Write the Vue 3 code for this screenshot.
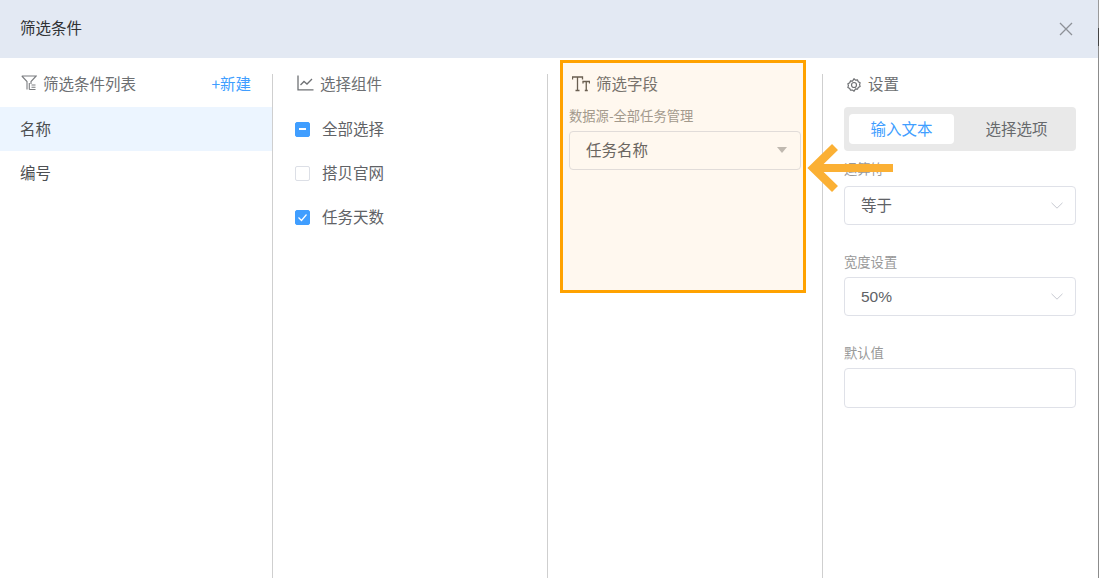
<script setup>
const components = [
  { label: '全部选择', state: 'mixed' },
  { label: '搭贝官网', state: 'off' },
  { label: '任务天数', state: 'on' }
]
</script>

<template>
  <div class="dialog">
    <header class="top">
      <span class="title">筛选条件</span>
      <svg class="close" width="14" height="14" viewBox="0 0 14 14"><path d="M1 1l12 12M13 1L1 13" stroke="#8d9197" stroke-width="1.3" fill="none"/></svg>
    </header>

    <main class="cols">
      <section class="col col-list">
        <div class="head head-list">
          <svg class="ic" width="16" height="16" viewBox="0 0 16 16" fill="none" stroke="#7b7d80" stroke-width="1.1"><path d="M.8 1h14.400L10 6.500V9M6 14.500V6.500L.8 1M8.300 8v6.500M10.500 10H14.500M10.500 12.200H14.500M8.300 14.500H14.500"/></svg>
          <span class="head-text">筛选条件列表</span>
          <span class="new">+新建</span>
        </div>
        <div class="item active">名称</div>
        <div class="item">编号</div>
      </section>

      <section class="col col-comp">
        <div class="head">
          <svg class="ic" width="17" height="16" viewBox="0 0 17 16" fill="none" stroke="#6f7174" stroke-width="1.300"><path d="M1 0.500V14.800H16.500M3.500 10l3.500-3.500 3 2.500 5-5"/></svg>
          <span class="head-text">选择组件</span>
        </div>
        <div v-for="c in components" :key="c.label" class="check-row">
          <span class="box" :class="c.state">
            <i v-if="c.state === 'mixed'" class="dash"></i>
            <svg v-if="c.state === 'on'" width="11" height="9" viewBox="0 0 11 9" fill="none" stroke="#fff" stroke-width="1.2"><path d="M1.500 4.500l3 3 5-6"/></svg>
          </span>
          <span class="check-label">{{ c.label }}</span>
        </div>
      </section>

      <section class="col col-field">
        <div class="head">
          <svg class="ic" width="18" height="16" viewBox="0 0 18 16" fill="none" stroke="#5f5b55" stroke-width="1.300"><path d="M0.500 3.500V1h10v2.500M5.500 1v13.500M3.500 14.500h4M11 7.500V5.500h6.500V7.500M14.250 5.500v9M12.800 14.500h3"/></svg>
          <span class="head-text">筛选字段</span>
        </div>
        <div class="label source">数据源-全部任务管理</div>
        <div class="select">
          <span class="val">任务名称</span>
          <i class="tri"></i>
        </div>
      </section>

      <section class="col col-set">
        <div class="head">
          <svg class="ic gear" width="14" height="14" viewBox="0 0 14 14" fill="none" stroke="#6f7174" stroke-width="1.200"><path d="M7 .8l1.500 1.300 2-.2.800 1.800 1.800 1-.5 1.900.5 1.800-1.800 1-.8 1.800-2-.2L7 13.200l-1.500-1.200-2 .2-.8-1.800-1.800-1 .5-1.800-.5-1.900 1.800-1 .8-1.800 2 .2z"/><circle cx="7" cy="7" r="2.500"/></svg>
          <span class="head-text">设置</span>
        </div>
        <div class="tabs">
          <span class="tab on">输入文本</span>
          <span class="tab">选择选项</span>
        </div>
        <div class="label first">运算符</div>
        <div class="select">
          <span class="val">等于</span>
          <svg class="chev" width="12" height="7" viewBox="0 0 12 7" fill="none" stroke="#c6c9d0" stroke-width="1"><path d="M.5 .8L6 6.200 11.500 .8"/></svg>
        </div>
        <div class="label">宽度设置</div>
        <div class="select">
          <span class="num">50%</span>
          <svg class="chev" width="12" height="7" viewBox="0 0 12 7" fill="none" stroke="#c6c9d0" stroke-width="1"><path d="M.5 .8L6 6.200 11.500 .8"/></svg>
        </div>
        <div class="label">默认值</div>
        <div class="input"></div>
      </section>
    </main>

    <div class="highlight"></div>
    <svg class="arrow" width="90" height="56" viewBox="0 0 90 56" fill="none" stroke="#fbb034" stroke-width="8"><path d="M10 28H89"/><path d="M31 7L9.500 28 31 49" stroke-width="8.500"/></svg>
  </div>
</template>

<style>
html, body { margin: 0; background: #fff; overflow: hidden; }
</style>

<style scoped>
.dialog {
  position: relative;
  width: 1099px;
  height: 585px;
  overflow: hidden;
  background: #fff;
  font-family: "Noto Sans CJK SC", "Noto Sans", sans-serif;
  color: #606266;
  font-size: 15.5px;
}
.dialog::after {
  content: "";
  position: absolute;
  top: 0;
  right: 0;
  bottom: 7px;
  width: 1px;
  background: linear-gradient(#9a9a9a 0 28px, #444 28px 46px, #8c8c8c 46px);
}
.top {
  height: 58px;
  background: #e3e9f3;
  display: flex;
  align-items: center;
  justify-content: space-between;
  padding: 0 26px 5px 20px;
  box-sizing: border-box;
}
.title { color: #303133; line-height: 20px; }
.close { display: block; margin-top: 5px; }
.cols { display: flex; padding-top: 16px; height: 504px; }
.col { box-sizing: border-box; border-right: 1px solid #cfcfcf; width: 275px; flex: none; }
.col-list { width: 273px; }
.col-comp { padding-left: 22px; }
.col-field { padding: 0 21px; }
.col-set { border-right: 0; padding: 0 22px 0 21px; }
.head { display: flex; align-items: center; height: 22px; margin-bottom: 11px; color: #6d6f72; }
.head-list { padding: 0 21px 0 20px; }
.ic { display: block; margin: -4px 6px 0 1px; flex: none; }
.col-comp .ic { margin-left: 2px; }
.col-field .ic { margin: -3px 6px 0 3px; }
.gear { margin: 0 7px 0 3px; }
.head-text, .new { line-height: 22px; margin-top: -4px; }
.new { margin-left: auto; color: #409eff; }
.item { height: 44px; line-height: 42px; padding-left: 20px; color: #4d4f52; }
.item.active { background: #ecf5ff; }
.check-row { display: flex; align-items: center; height: 44px; }
.box {
  box-sizing: border-box;
  width: 15px;
  height: 15px;
  border: 1px solid #dcdfe6;
  border-radius: 2px;
  display: flex;
  align-items: center;
  justify-content: center;
  margin: 0 12px 0 0;
  background: #fff;
}
.box.mixed, .box.on { background: #409eff; border-color: #409eff; }
.dash { width: 7px; height: 2px; background: #fff; display: block; }
.check-label { line-height: 20px; margin-top: -2px; }
.label { font-size: 13.300px; line-height: 18px; margin: 28px 0 6px; color: #999; }
.label.source { margin-top: 0; color: #9c9a96; }
.label.first { margin: 9px 0 8px; }
.select {
  box-sizing: border-box;
  height: 39px;
  border: 1px solid #dfe1e8;
  border-radius: 4px;
  display: flex;
  align-items: center;
  justify-content: space-between;
  padding: 0 17px 0 16px;
  color: #606266;
}
.val { margin-top: -3px; }
.tri { width: 0; height: 0; border: 5px solid transparent; border-top: 6px solid #bcbcbc; border-bottom: 0; margin: -2px -4px 0 0; }
.chev { display: block; margin-right: -5px; }
.num { font-family: "Liberation Sans", sans-serif; }
.input { box-sizing: border-box; height: 40px; border: 1px solid #dfe1e8; border-radius: 4px; }
.tabs {
  display: flex;
  gap: 10px;
  height: 44px;
  box-sizing: border-box;
  padding: 7px 5px;
  background: #e9e9e9;
  border-radius: 4px;
}
.tab { width: 105px; height: 30px; line-height: 28px; text-align: center; border-radius: 4px; color: #67696c; }
.tab.on { background: #fff; color: #409eff; }
.highlight {
  position: absolute;
  left: 560px;
  top: 60px;
  width: 246px;
  height: 233px;
  box-sizing: border-box;
  border: 3px solid #ffa200;
  background: rgba(255, 150, 30, 0.07);
}
.arrow { position: absolute; left: 804px; top: 140px; display: block; }
</style>
